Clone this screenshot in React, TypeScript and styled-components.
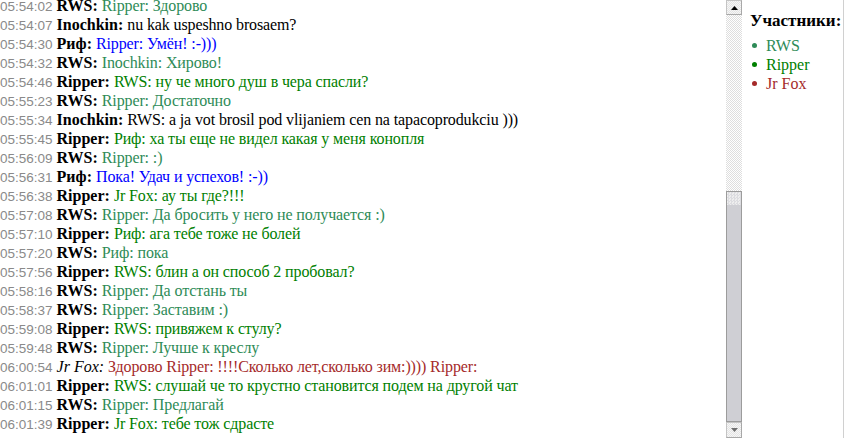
import React from "react";
import styled, { createGlobalStyle } from "styled-components";

const GlobalStyle = createGlobalStyle`
  html, body { margin: 0; padding: 0; background: #ffffff; overflow: hidden; }
  #root { width: 844px; height: 438px; }
`;

const Frame = styled.div`
  display: flex;
  width: 844px;
  height: 438px;
  background: #ffffff;
`;

const ChatPane = styled.div`
  flex: none;
  display: flex;
  width: 742px;
  height: 438px;
`;

const Messages = styled.div`
  flex: 1;
  min-width: 0;
  overflow: hidden;
  display: flex;
  flex-direction: column;
  justify-content: flex-end;
  padding: 0 0 5px 0;
  font-family: "Liberation Serif", "Times New Roman", serif;
  font-size: 16px;
  line-height: 19px;
`;

const Line = styled.div`
  flex: none;
  height: 19px;
  line-height: 19px;
  white-space: nowrap;
  color: #000;
`;

const Time = styled.span`
  font-family: "Liberation Sans", Arial, sans-serif;
  font-size: 13.5px;
  line-height: 1;
  color: #8a8a8a;
`;

const Nick = styled.span<{ $italic?: boolean }>`
  font-weight: ${(p) => (p.$italic ? "normal" : "bold")};
  font-style: ${(p) => (p.$italic ? "italic" : "normal")};
  color: #000;
`;

const Text = styled.span<{ $color: string }>`
  color: ${(p) => p.$color};
  letter-spacing: -0.12px;
`;

const ScrollBar = styled.div`
  flex: none;
  width: 16px;
  display: flex;
  flex-direction: column;
`;

const ArrowButton = styled.div<{ $h: number }>`
  flex: none;
  height: ${(p) => p.$h}px;
  box-sizing: border-box;
  border: 1px solid #c4c4c4;
  border-right-color: #a8a8a8;
  border-bottom-color: #a8a8a8;
  background: repeating-conic-gradient(#e4e4e4 0 25%, #f6f6f6 0 50%) 0 0 / 2px 2px;
  display: flex;
  align-items: center;
  justify-content: center;
`;

const Track = styled.div`
  flex: 1;
  display: flex;
  flex-direction: column;
  background: repeating-conic-gradient(#dedede 0 25%, #ffffff 0 50%) 0 0 / 2px 2px;
`;

const TrackGap = styled.div`
  flex: none;
  height: 176px;
`;

const Thumb = styled.div`
  flex: 1;
  box-sizing: border-box;
  border: 1px solid #9c9c9c;
  background:
    linear-gradient(#cfcfd4, #cfcfd4) 0 13px / 100% 100% no-repeat,
    repeating-conic-gradient(#dcdce0 0 25%, #eeeeee 0 50%) 0 0 / 3px 3px;
`;

const Participants = styled.div`
  flex: 1;
  box-sizing: border-box;
  border-right: 1px solid #d0d0d0;
  padding: 11px 0 0 8px;
  font-family: "Liberation Serif", "Times New Roman", serif;
  font-size: 16px;
  line-height: 19px;
`;

const Title = styled.div`
  font-size: 17px;
  font-weight: bold;
  color: #000;
  white-space: nowrap;
  height: 19px;
  margin-bottom: 6px;
`;

const List = styled.ul`
  margin: 0;
  padding: 0;
  list-style: none;
`;

const Member = styled.li<{ $color: string }>`
  display: flex;
  align-items: center;
  height: 19px;
  color: ${(p) => p.$color};
  white-space: nowrap;
  &::before {
    content: "";
    width: 5px;
    height: 5px;
    border-radius: 50%;
    background: ${(p) => p.$color};
    margin: 0 9px 0 2px;
    flex: none;
  }
`;

const SEA = "#2e8b57";
const GREEN = "#008000";
const BLUE = "#0000ff";
const BROWN = "#a52a2a";
const BLACK = "#000000";

type Msg = { t: string; n: string; m: string; c: string; i?: boolean };

const messages: Msg[] = [
  { t: "05:54:02", n: "RWS:", m: "Ripper: Здорово", c: SEA },
  { t: "05:54:07", n: "Inochkin:", m: "nu kak uspeshno brosaem?", c: BLACK },
  { t: "05:54:30", n: "Риф:", m: "Ripper: Умён! :-)))", c: BLUE },
  { t: "05:54:32", n: "RWS:", m: "Inochkin: Хирово!", c: SEA },
  { t: "05:54:46", n: "Ripper:", m: "RWS: ну че много душ в чера спасли?", c: GREEN },
  { t: "05:55:23", n: "RWS:", m: "Ripper: Достаточно", c: SEA },
  { t: "05:55:34", n: "Inochkin:", m: "RWS: a ja vot brosil pod vlijaniem cen na tapacoprodukciu )))", c: BLACK },
  { t: "05:55:45", n: "Ripper:", m: "Риф: ха ты еще не видел какая у меня конопля", c: GREEN },
  { t: "05:56:09", n: "RWS:", m: "Ripper: :)", c: SEA },
  { t: "05:56:31", n: "Риф:", m: "Пока! Удач и успехов! :-))", c: BLUE },
  { t: "05:56:38", n: "Ripper:", m: "Jr Fox: ау ты где?!!!", c: GREEN },
  { t: "05:57:08", n: "RWS:", m: "Ripper: Да бросить у него не получается :)", c: SEA },
  { t: "05:57:10", n: "Ripper:", m: "Риф: ага тебе тоже не болей", c: GREEN },
  { t: "05:57:20", n: "RWS:", m: "Риф: пока", c: SEA },
  { t: "05:57:56", n: "Ripper:", m: "RWS: блин а он способ 2 пробовал?", c: GREEN },
  { t: "05:58:16", n: "RWS:", m: "Ripper: Да отстань ты", c: SEA },
  { t: "05:58:37", n: "RWS:", m: "Ripper: Заставим :)", c: SEA },
  { t: "05:59:08", n: "Ripper:", m: "RWS: привяжем к стулу?", c: GREEN },
  { t: "05:59:48", n: "RWS:", m: "Ripper: Лучше к креслу", c: SEA },
  { t: "06:00:54", n: "Jr Fox:", m: "Здорово Ripper: !!!!Сколько лет,сколько зим:)))) Ripper:", c: BROWN, i: true },
  { t: "06:01:01", n: "Ripper:", m: "RWS: слушай че то крустно становится подем на другой чат", c: GREEN },
  { t: "06:01:15", n: "RWS:", m: "Ripper: Предлагай", c: SEA },
  { t: "06:01:39", n: "Ripper:", m: "Jr Fox: тебе тож сдрасте", c: GREEN },
];

const Arrow = ({ up, color }: { up?: boolean; color: string }) => (
  <svg width="7" height="4" viewBox="0 0 7 4">
    <polygon points={up ? "0,4 7,4 3.5,0" : "0,0 7,0 3.5,4"} fill={color} />
  </svg>
);

export default function App() {
  return (
    <>
      <GlobalStyle />
      <Frame>
        <ChatPane>
          <Messages>
            {messages.map((msg, idx) => (
              <Line key={idx}>
                <Time>{msg.t}</Time> <Nick $italic={msg.i}>{msg.n}</Nick>{" "}
                <Text $color={msg.c}>{msg.m}</Text>
              </Line>
            ))}
          </Messages>
          <ScrollBar>
            <ArrowButton $h={15}>
              <Arrow up color="#000" />
            </ArrowButton>
            <Track>
              <TrackGap />
              <Thumb />
            </Track>
            <ArrowButton $h={16}>
              <Arrow color="#707070" />
            </ArrowButton>
          </ScrollBar>
        </ChatPane>
        <Participants>
          <Title>Участники:</Title>
          <List>
            <Member $color={SEA}>RWS</Member>
            <Member $color={GREEN}>Ripper</Member>
            <Member $color={BROWN}>Jr Fox</Member>
          </List>
        </Participants>
      </Frame>
    </>
  );
}
